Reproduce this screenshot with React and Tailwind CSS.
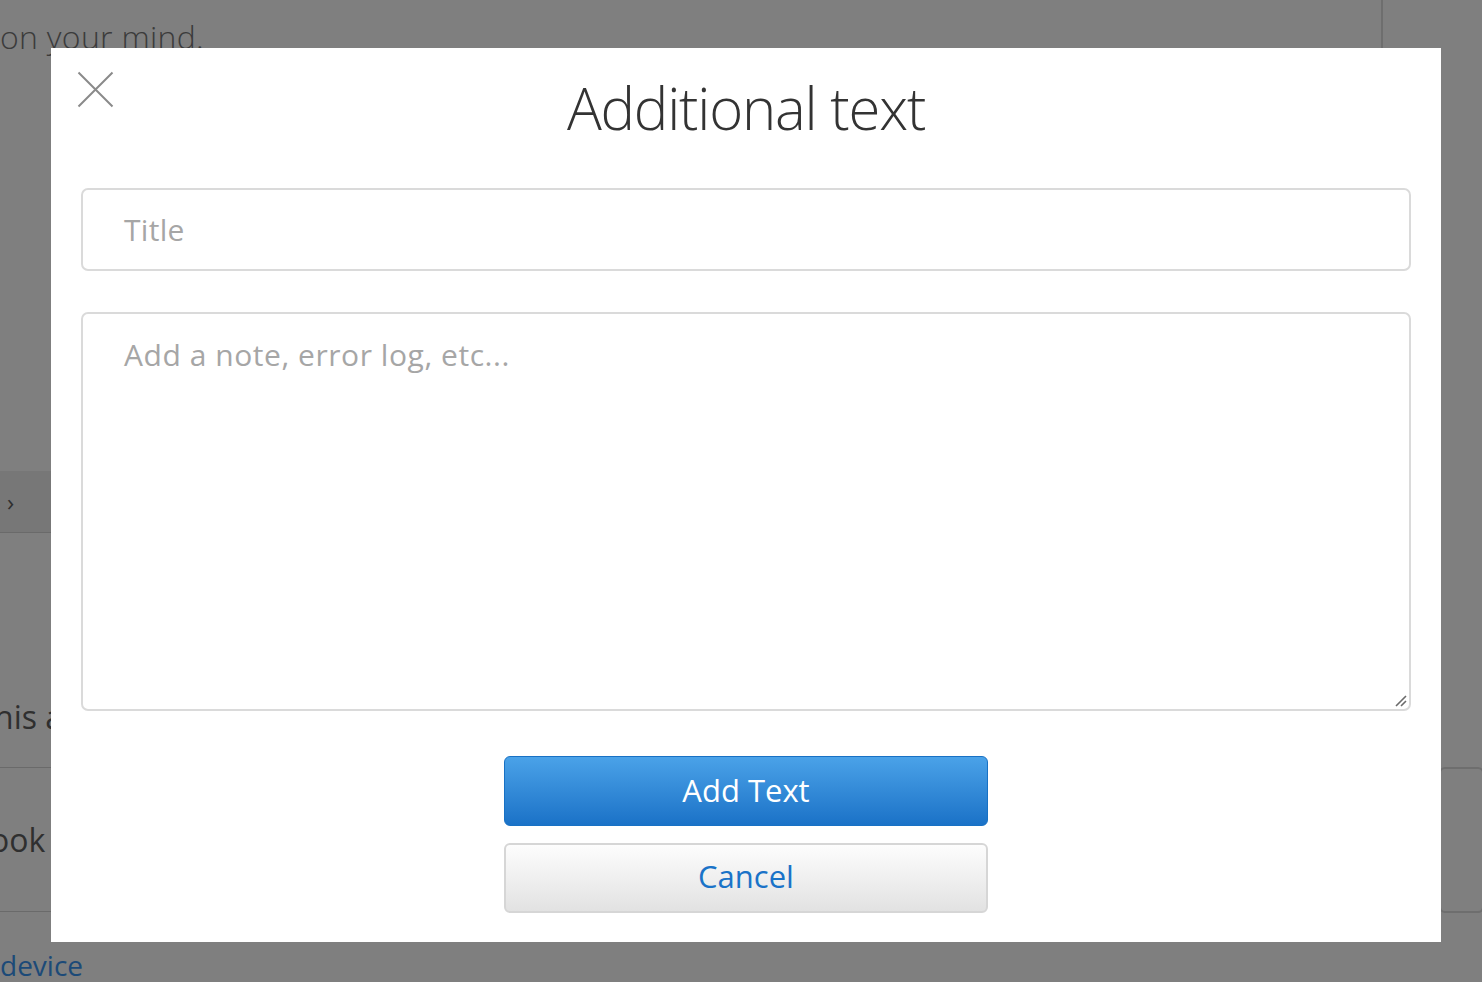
import React from "react";

export default function App() {
  return (
    <div
      className="relative w-[1482px] h-[982px] overflow-hidden bg-[#7f7f7f]"
      style={{ fontFamily: '"Open Sans", "Noto Sans", sans-serif' }}
    >
      {/* background page (dimmed) */}
      <div className="flex h-full">
        <div className="flex-1 flex flex-col">
          <div className="h-[48px] pt-[17px] text-[32px] leading-[40px] text-[#3b3b3b] font-light whitespace-nowrap tracking-[0.3px]">
            on your mind.
          </div>
          <div className="h-[423px]" />
          <div className="h-[62px] bg-[#777777] border-b border-[#6a6a6a] flex items-center pl-[7px] text-[#2f2f2f] text-[24px]">
            ›
          </div>
          <div className="h-[166px]" />
          <div className="h-[68px] pt-[-2px] text-[32px] leading-[36px] text-[#2f2f2f] whitespace-nowrap -ml-[6px]">his a</div>
          <div className="h-[145px] border-t border-b border-[#6a6a6a] flex items-center text-[32px] text-[#2f2f2f] -ml-[10px]">
            ook
          </div>
          <div className="pt-[36px] text-[28px] leading-[34px] text-[#1c4a78] whitespace-nowrap">device</div>
        </div>
        <div className="w-[101px] flex flex-col">
          <div className="h-[48px] border-l-2 border-[#6e6e6e]" />
          <div className="h-[719px]" />
          <div className="h-[146px] ml-[58px] -mr-[2px] border-2 border-[#6e6e6e] rounded-[6px]" />
        </div>
      </div>

      {/* modal */}
      <div className="absolute left-[51px] top-[48px] w-[1390px] h-[894px] bg-white flex flex-col">
        <button className="absolute left-[26px] top-[23px] w-[37px] h-[37px]" aria-label="Close">
          <svg width="37" height="37" viewBox="0 0 37 37">
            <path d="M1.5 1.5 L35.5 35.5 M35.5 1.5 L1.5 35.5" stroke="#8a8a8a" strokeWidth="2" fill="none" />
          </svg>
        </button>
        <h1 className="text-center pt-[20px] text-[58px] leading-[80px] font-light text-[#333333] tracking-[-1.2px]">
          Additional text
        </h1>
        <div className="px-[30px] pt-[40px] flex flex-col">
          <div className="h-[83px] border-2 border-[#dadada] rounded-[7px] flex items-center pl-[41px] text-[30px] tracking-[0.3px] text-[#a6a6a6]">
            Title
          </div>
          <div className="mt-[41px] h-[399px] border-2 border-[#dadada] rounded-[7px] pl-[41px] pt-[21px] text-[30px] leading-[40px] tracking-[0.55px] text-[#a6a6a6] relative">
            Add a note, error log, etc...
            <svg className="absolute right-[2px] bottom-[2px]" width="14" height="14" viewBox="0 0 14 14">
              <path d="M3 13 L13 3 M8 13 L13 8" stroke="#6b6b6b" strokeWidth="1.6" />
            </svg>
          </div>
        </div>
        <div className="flex flex-col items-center pt-[45px] gap-[17px]">
          <button className="w-[484px] h-[70px] rounded-[6px] border border-[#1871c4] bg-gradient-to-b from-[#4aa2e8] to-[#1a72c7] text-white text-[31px] pb-[2px]">
            Add Text
          </button>
          <button className="w-[484px] h-[70px] rounded-[6px] border-2 border-[#d6d6d6] bg-gradient-to-b from-[#fdfdfd] to-[#e2e2e2] text-[#1a73c8] text-[31px] pb-[4px]">
            Cancel
          </button>
        </div>
      </div>
    </div>
  );
}
